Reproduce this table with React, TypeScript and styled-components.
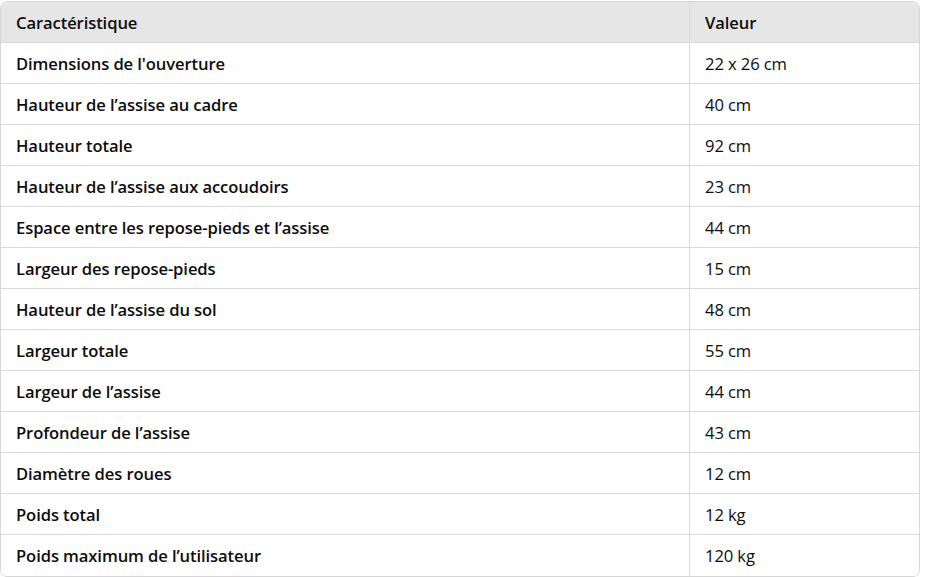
import React from "react";
import styled, { createGlobalStyle } from "styled-components";

const Global = createGlobalStyle`
  html, body { margin: 0; padding: 0; background: #ffffff; }
  body { font-family: "Open Sans", "Noto Sans", sans-serif; }
`;

const Page = styled.div`
  padding-top: 1px;
  width: 920px;
`;

const Table = styled.div`
  display: grid;
  grid-template-columns: 689px 1fr;
  border: 1px solid #d6d6d6;
  border-radius: 7px;
  overflow: hidden;
  box-sizing: border-box;
  width: 920px;
`;

const Cell = styled.div<{ $head?: boolean; $first?: boolean; $last?: boolean }>`
  height: 41px;
  box-sizing: border-box;
  display: flex;
  align-items: center;
  padding: 0 0 0 15px;
  font-size: 16.6px;
  letter-spacing: -0.1px;
  color: #0d0d0d;
  font-weight: ${(p) => (p.$first || p.$head ? 600 : 400)};
  background: ${(p) => (p.$head ? "#e6e6e6" : "#ffffff")};
  border-bottom: ${(p) => (p.$last ? "none" : "1px solid #d9d9d9")};
  border-right: ${(p) => (p.$first ? "1px solid #d9d9d9" : "none")};
`;

const rows: [string, string][] = [
  ["Dimensions de l'ouverture", "22 x 26 cm"],
  ["Hauteur de l’assise au cadre", "40 cm"],
  ["Hauteur totale", "92 cm"],
  ["Hauteur de l’assise aux accoudoirs", "23 cm"],
  ["Espace entre les repose-pieds et l’assise", "44 cm"],
  ["Largeur des repose-pieds", "15 cm"],
  ["Hauteur de l’assise du sol", "48 cm"],
  ["Largeur totale", "55 cm"],
  ["Largeur de l’assise", "44 cm"],
  ["Profondeur de l’assise", "43 cm"],
  ["Diamètre des roues", "12 cm"],
  ["Poids total", "12 kg"],
  ["Poids maximum de l’utilisateur", "120 kg"],
];

export default function App() {
  return (
    <Page>
      <Global />
      <Table>
        <Cell $head $first>Caractéristique</Cell>
        <Cell $head>Valeur</Cell>
        {rows.map(([k, v], i) => (
          <React.Fragment key={k}>
            <Cell $first $last={i === rows.length - 1}>{k}</Cell>
            <Cell $last={i === rows.length - 1}>{v}</Cell>
          </React.Fragment>
        ))}
      </Table>
    </Page>
  );
}
